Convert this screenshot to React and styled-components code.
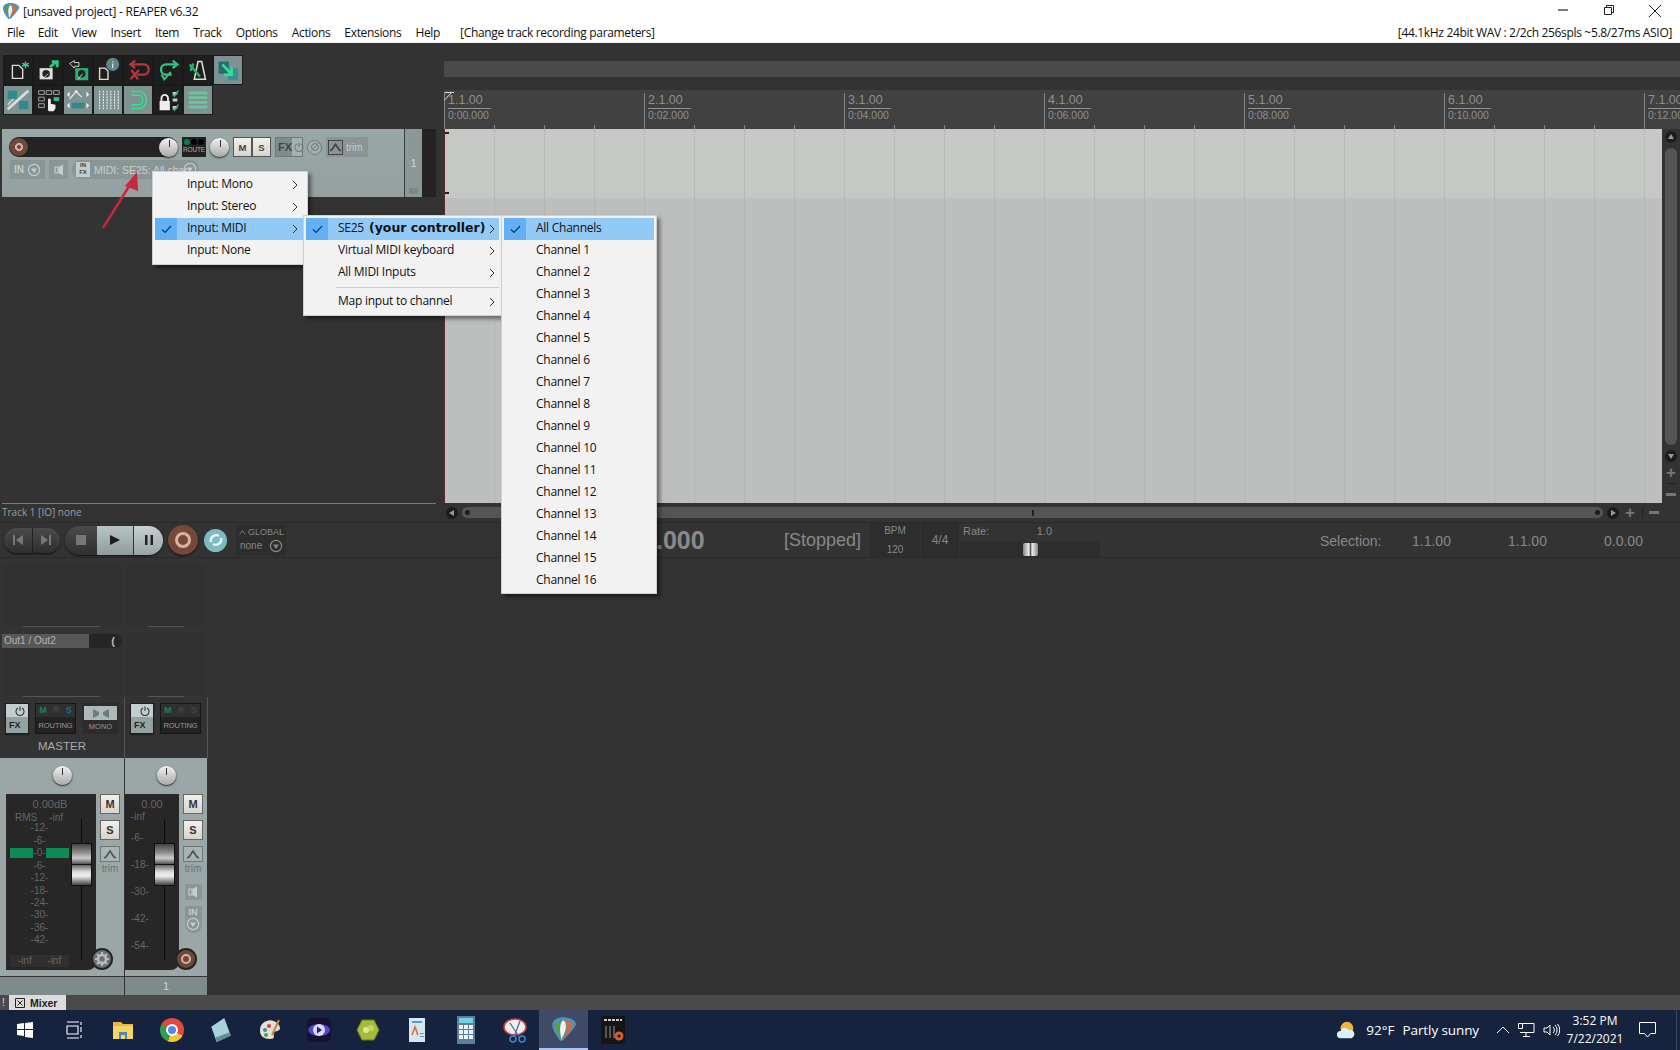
import React from 'react';
import styled, { createGlobalStyle } from 'styled-components';

const MENU_ITEMS = [
  ['File', 7], ['Edit', 13], ['View', 14], ['Insert', 14], ['Item', 14], ['Track', 14],
  ['Options', 14], ['Actions', 14], ['Extensions', 14], ['Help', 14],
];
const BARS = ['1.1.00|0:00.000', '2.1.00|0:02.000', '3.1.00|0:04.000', '4.1.00|0:06.000', '5.1.00|0:08.000', '6.1.00|0:10.000', '7.1.00|0:12.000'];
const MASTER_SCALE = ['-12-', '-6-', '-0-', '-6-', '-12-', '-18-', '-24-', '-30-', '-36-', '-42-'];
const TRACK_SCALE = ['-6-', '-18-', '-30-', '-42-', '-54-'];
const CHANNELS = Array.from({ length: 16 }, (_, i) => `Channel ${i + 1}`);
const BEATS = Array.from({ length: 25 }, (_, i) => i);

const TOOLBAR_ONE = [
  { d: <><path d="M9 10h7l4 4v10H9z" fill="none" stroke="#ddd" strokeWidth="1.5" /><path d="M23 6v7M19.5 8l7 3M26.5 8l-7 3" stroke="#3fd08c" strokeWidth="1.5" /></> },
  { d: <><path d="M6 13h14v12H6z" fill="#ddd" /><circle cx="13" cy="19" r="4" fill="#222" /><path d="M10 24l5-5" stroke="#ddd" /><path d="M17 12l7-6M19 6h6v6" stroke="#2fc683" strokeWidth="3" fill="none" /></> },
  { d: <><path d="M6 8l5-3v2h5v4h-5v2z" fill="none" stroke="#ddd" /><path d="M12 13h14v13H12z" fill="#28b070" /><circle cx="19" cy="19" r="4" fill="#222" /><path d="M15 25l5-6" stroke="#ddd" /></> },
  { d: <><path d="M6 13h6l3 3v9H6z" fill="none" stroke="#ddd" strokeWidth="1.5" /><circle cx="20" cy="9" r="7" fill="#5f8486" /><path d="M20 6v1M20 8v5" stroke="#ddd" strokeWidth="1.4" /></> },
  { d: <><path d="M8 9h13a5 5 0 010 11h-7" fill="none" stroke="#b3383b" strokeWidth="2.5" /><path d="M12 5L7 9l5 4" fill="none" stroke="#b3383b" strokeWidth="2.5" /><path d="M7 25l9-10M8 15l7 10" stroke="#b3383b" strokeWidth="2.5" /></> },
  { d: <><path d="M24 9H13a5 5 0 000 11h6" fill="none" stroke="#2fc683" strokeWidth="2.5" /><path d="M20 5l5 4-5 4" fill="none" stroke="#2fc683" strokeWidth="2.5" /><path d="M8 20l3 5 7-8" fill="none" stroke="#2fc683" strokeWidth="2" /></> },
  { d: <><path d="M11 25l4-19 4 0 4 19z" fill="none" stroke="#ddd" strokeWidth="1.6" /><path d="M6 9l11 13M10 8l-3 8" stroke="#22b56e" strokeWidth="2.5" /></> },
  { on: true, d: <><path d="M5 6h11v13H5z" fill="#1f6e72" /><path d="M15 13h11v13H15z" fill="#3b8f92" /><path d="M9 9l10 11M19 12v8h-8" stroke="#35e08e" strokeWidth="2.6" fill="none" /></> },
];
const TOOLBAR_TWO = [
  { on: true, d: <><path d="M4 5h10v9H4zM16 16h10v9H16z" fill="#2f8a8c" /><path d="M4 25L26 5" stroke="#d6dcdc" strokeWidth="3" /><path d="M4 20l6-6M20 11l6-6" stroke="#d6dcdc" strokeWidth="1.4" /></> },
  { d: <><path d="M5 5h6v4H5zM13 5h6v4h-6zM21 5h6v4h-6zM5 12h6v4H5zM5 19h6v4H5z" fill="none" stroke="#aaa" /><path d="M21 12h6v4h-6z" fill="#2fc683" /><path d="M15 26v-11a1.5 1.5 0 013 0v4l5 1v4l-2 3h-5z" fill="#eee" /></> },
  { on: true, d: <><path d="M6 14l7-8 6 6" fill="none" stroke="#eee" strokeWidth="1.2" /><circle cx="13" cy="6" r="1.5" fill="#eee" /><path d="M3 9l3-3v6zM27 9l-3-3v6zM3 21l3-3v6zM27 21l-3-3v6z" fill="#eee" /><path d="M8 18h14v6H8z" fill="#2f8a8c" /></> },
  { on: true, d: <path d="M6 5v20M10 5v20M14 5v20M18 5v20M22 5v20M26 5v20" stroke="#e7eeee" strokeWidth="1.2" strokeDasharray="2 1" /> },
  { on: true, d: <path d="M8 6h8a8 9 0 010 18H8M8 10h8a4 5 0 010 10H8" fill="none" stroke="#35e08e" strokeWidth="1.6" /> },
  { d: <><path d="M6 16h11v10H6z" fill="#eee" /><path d="M8 16v-3a3.5 3.5 0 017 0v3" fill="none" stroke="#eee" strokeWidth="2" /><path d="M20 8h5M20 15h5M20 23h5" stroke="#ccc" strokeWidth="3" /><path d="M20 9l2 2 4-6M20 24l2 2 4-6" fill="none" stroke="#2fc683" strokeWidth="1.5" /></> },
  { on: true, d: <path d="M5 6h20v3H5zM5 11h20v3H5zM5 16h20v3H5zM5 21h20v3H5z" fill="#6fc8a0" opacity=".85" /> },
];

const ReaperLogo = ({ size = 18 }) => (
  <svg width={size} height={size} viewBox="0 0 20 20">
    <path d="M10 1C5 1 1 3 1 7c0 4 4 9 6 12h2c3-3 8-8 10-12 1-3-4-6-9-6z" fill="#4d94b8" />
    <path d="M10.5 3.5c3 0 6 1.5 6 3.5 0 3-4 8-7.5 11 2-4 4-8 3-11-.5-1.500-1-2.500-1.500-3.500z" fill="#d9683c" />
    <path d="M8 18C6 14 3.500 9.500 3.500 7c0-2 2.500-3.500 5-3.500-2.500 3.500-1.500 9-.5 14.500z" fill="#5d9e3a" />
    <path d="M9 3.500c1.500 0 2.500 2 2.500 4.500 0 3-2 7-3.500 10-1-5-2-11 1-14.500z" fill="#f2f2f2" />
  </svg>
);

const ArrowDown = () => (
  <svg width="14" height="14" viewBox="0 0 14 14">
    <circle cx="7" cy="7" r="5.6" fill="none" stroke="currentColor" strokeWidth="1.2" />
    <path d="M4 5.500h6L7 10z" fill="currentColor" />
  </svg>
);

const EnvelopeGlyph = () => (
  <svg width="14" height="10" viewBox="0 0 14 10">
    <path d="M1 9l2-1 4-6 4 6 2 1" fill="none" stroke="currentColor" strokeWidth="1.8" />
  </svg>
);

const SendGlyph = () => (
  <svg width="10" height="14" viewBox="0 0 10 14">
    <path d="M1 4h3v6H1z" fill="none" stroke="currentColor" strokeWidth="1.2" />
    <path d="M4.500 4l4.500-2.500v11L4.500 10z" fill="currentColor" />
  </svg>
);

const PowerGlyph = ({ color = '#333' }) => (
  <svg width="10" height="10" viewBox="0 0 10 10">
    <path d="M3 2a4 4 0 104 0M5 .5V5" fill="none" stroke={color} strokeWidth="1.1" />
  </svg>
);

const Fader = ({ $left }) => (
  <FaderCap $left={$left}>
    <CapHalf />
    <CapHalf $lower />
  </FaderCap>
);

const Menu = ({ children, $x, $y, $w, $h, $z }) => (
  <MenuBox style={{ left: $x, top: $y, width: $w, height: $h, zIndex: $z }}>{children}</MenuBox>
);

const MenuRow = ({ label, checked, arrow, active, bold, $arrowAt }) => (
  <Row $active={active}>
    <Check $active={active}>
      {checked && (
        <svg width="11" height="9" viewBox="0 0 11 9">
          <path d="M1 4.500l3 3 6-6.500" fill="none" stroke="#14395c" strokeWidth="1.2" />
        </svg>
      )}
    </Check>
    <RowLabel>
      {label}
      {bold && <BoldLabel>{bold}</BoldLabel>}
    </RowLabel>
    {arrow && (
      <Chevron $at={$arrowAt} width="6" height="10" viewBox="0 0 6 10">
        <path d="M1 1l4 4-4 4" fill="none" stroke="#333" strokeWidth="1" />
      </Chevron>
    )}
  </Row>
);

const TaskIcons = [
  <svg width="20" height="20" viewBox="0 0 20 20" key="start"><path d="M2 4l7-1v6H2zM10 3l8-1v7h-8zM2 10h7v6l-7-1zM10 10h8v8l-8-1z" fill="#fff" /></svg>,
  <svg width="20" height="20" viewBox="0 0 20 20" key="view" fill="none" stroke="#fff" strokeWidth="1.1"><path d="M3 2h12M3 18h12" /><path d="M3 6h11v8H3z" /><path d="M17 2v3M17 7v5M17 15v3" /></svg>,
  <svg width="24" height="24" viewBox="0 0 24 24" key="files"><path d="M2 4h8l2 2h10v15H2z" fill="#e8b93f" /><path d="M2 8h20v13H2z" fill="#f7d463" /><path d="M8 14h8v7h-2v-4h-4v4H8z" fill="#4c87b8" /></svg>,
  <ChromeIcon key="chrome" />,
  <svg width="26" height="26" viewBox="0 0 24 24" key="notes"><path d="M3 9L15 1l6 16-13 6z" fill="#a8d2da" /><path d="M8 23l13-6-1-3-13 5z" fill="#5d8f9c" /></svg>,
  <svg width="26" height="26" viewBox="0 0 26 26" key="paint"><path d="M3 14a10 9 0 0120-3c0 4-5 2-6 5s2 6-4 6-10-3-10-8z" fill="#e4e0d2" /><circle cx="8" cy="13" r="2" fill="#3a7fd0" /><circle cx="12" cy="9" r="2" fill="#d23f3f" /><circle cx="9" cy="18" r="2" fill="#3fa34f" /><path d="M15 18L22 3" stroke="#c28a45" strokeWidth="2" /></svg>,
  <svg width="26" height="26" viewBox="0 0 26 26" key="player"><rect x="1" y="1" width="24" height="24" rx="5" fill="#171233" /><ellipse cx="13" cy="13" rx="11" ry="6" fill="#5248c9" /><circle cx="13" cy="13" r="6" fill="#ddd8ff" /><path d="M11 9.500l5 3.500-5 3.500z" fill="#281d75" /></svg>,
  <svg width="24" height="24" viewBox="0 0 24 24" key="hex"><path d="M6 2h12l5 10-5 10H6L1 12z" fill="#a3bb37" stroke="#6c8022" /><circle cx="10" cy="12" r="3" fill="#dbe89a" /><circle cx="15" cy="10" r="3" fill="#c1d663" /></svg>,
  <svg width="22" height="26" viewBox="0 0 22 26" key="doc"><path d="M3 1h16v24H3z" fill="#d7e6f3" /><path d="M6 4h10v2H6zM14 16h4v1h-4zM14 19h4v1h-4z" fill="#5a98d0" /><path d="M6 18l3-8 3 8" fill="none" stroke="#e06a3b" strokeWidth="1.6" /></svg>,
  <svg width="20" height="28" viewBox="0 0 20 28" key="calc"><rect x="1" y="0" width="18" height="28" fill="#5e7f9b" /><rect x="3" y="2" width="14" height="5" fill="#6fd1ea" /><path d="M3 9h4v4H3zM8 9h4v4H8zM13 9h4v4h-4zM3 14h4v4H3zM8 14h4v4H8zM13 14h4v4h-4zM3 19h4v4H3zM8 19h4v4H8zM13 19h4v4h-4z" fill="#eef3f7" /></svg>,
  <svg width="26" height="26" viewBox="0 0 26 26" key="snip"><ellipse cx="13" cy="10" rx="11" ry="8" fill="#f0eee8" stroke="#c7414a" strokeWidth="1.5" /><path d="M8 6l10 15M18 4L12 20" stroke="#3b6d9d" strokeWidth="1.2" /><circle cx="20" cy="22" r="3" fill="none" stroke="#3a8ad0" strokeWidth="1.5" /><circle cx="11" cy="22" r="3" fill="none" stroke="#3a8ad0" strokeWidth="1.5" /></svg>,
  <ReaperLogo size={26} key="reaper" />,
  <svg width="26" height="30" viewBox="0 0 26 30" key="tascam"><rect x="1" y="1" width="24" height="28" rx="2" fill="#151515" /><path d="M4 5h18" stroke="#ccc" strokeWidth="2" strokeDasharray="3 1" /><path d="M6 11v12M10 11v12M14 11v12" stroke="#999" /><circle cx="19" cy="21" r="4.500" fill="#d75a2a" /><circle cx="19" cy="21" r="1.600" fill="#151515" /></svg>,
];

function ChromeIcon() {
  return (
    <ChromeDisc>
      <ChromeDot />
    </ChromeDisc>
  );
}

const App = () => (
  <Page>
    <GlobalStyle />
    <TitleBar>
      <TitleGroup>
        <ReaperLogo />
        <span>[unsaved project] - REAPER v6.32</span>
      </TitleGroup>
      <WindowButtons>
        <WinButton>
          <svg width="12" height="12" viewBox="0 0 12 12"><path d="M1 6h10" stroke="#222" strokeWidth="1.2" /></svg>
        </WinButton>
        <WinButton>
          <svg width="12" height="12" viewBox="0 0 12 12" fill="none" stroke="#222"><path d="M1.500 3.500h7v7h-7z" /><path d="M3.500 3V1.500h7v7H9" /></svg>
        </WinButton>
        <WinButton>
          <svg width="14" height="14" viewBox="0 0 14 14"><path d="M1 1l12 12M13 1L1 13" stroke="#222" strokeWidth="1" /></svg>
        </WinButton>
      </WindowButtons>
    </TitleBar>
    <MenuBar>
      {MENU_ITEMS.map(([name, gap]) => (
        <MenuLabel key={name} $gap={gap}>{name}</MenuLabel>
      ))}
      <MenuHint>[Change track recording parameters]</MenuHint>
      <MenuStatus>[44.1kHz 24bit WAV : 2/2ch 256spls ~5.8/27ms ASIO]</MenuStatus>
    </MenuBar>

    <Workspace>
      <LeftPane>
        <ToolRow>
          {TOOLBAR_ONE.map((t, i) => (
            <ToolCell key={i} $on={t.on}><svg width="28" height="28" viewBox="0 0 30 30">{t.d}</svg></ToolCell>
          ))}
        </ToolRow>
        <ToolRow>
          {TOOLBAR_TWO.map((t, i) => (
            <ToolCell key={i} $on={t.on}><svg width="28" height="28" viewBox="0 0 30 30">{t.d}</svg></ToolCell>
          ))}
        </ToolRow>
        <TrackLane>
          <TrackPanel>
            <TrackRow>
              <NameField>
                <RecArm $size={18} />
                <Knob $size={19} />
              </NameField>
              <RouteBox>
                <RouteDots><i /><b /><b /></RouteDots>
                ROUTE
              </RouteBox>
              <Knob $size={19} />
              <MuteSolo>
                <MsButton>M</MsButton>
                <MsButton>S</MsButton>
              </MuteSolo>
              <FxBox>
                <span>FX</span>
                <FxPower><PowerGlyph color="#6f7c7c" /></FxPower>
              </FxBox>
              <PhaseButton>
                <svg width="10" height="10" viewBox="0 0 10 10"><circle cx="5" cy="5" r="3.500" fill="none" stroke="#777" /><path d="M1 9l8-8" stroke="#777" /></svg>
              </PhaseButton>
              <TrimBox>
                <EnvButton><EnvelopeGlyph /></EnvButton>
                trim
              </TrimBox>
            </TrackRow>
            <TrackRow>
              <InBox>IN <ArrowDown /></InBox>
              <SendBox><SendGlyph /></SendBox>
              <InputChip>
                <InFxIcon>IN<br />FX</InFxIcon>
                <InputText>MIDI: SE25: All chan</InputText>
                <ChipArrow><ArrowDown /></ChipArrow>
              </InputChip>
            </TrackRow>
          </TrackPanel>
          <TrackNumber>
            1
            <FolderMark />
          </TrackNumber>
          <MeterStrip />
        </TrackLane>
        <Status>Track 1 [IO] none</Status>
      </LeftPane>

      <ArrangePane>
        <MarkerLane />
        <Ruler>
          <StartFlag width="11" height="9" viewBox="0 0 11 9">
            <path d="M0 8.500L7.500.5H.5M10 .5H7.500" fill="none" stroke="#ddd" />
          </StartFlag>
          {BARS.map((b) => {
            const [bar, time] = b.split('|');
            return (
              <BarMark key={b}>
                <BarText>{bar}</BarText>
                <TimeText>{time}</TimeText>
              </BarMark>
            );
          })}
        </Ruler>
        <ArrangeBody>
          <Tracks>
            <Beats>
              {BEATS.map((n) => <Beat key={n} />)}
            </Beats>
            <TrackBand />
            <EmptyBand />
            <RailTick $top={3} />
            <RailTick $top={63} />
          </Tracks>
          <VScroll>
            <ScrollDot>
              <svg width="8" height="8" viewBox="0 0 8 8"><path d="M4 1l3 5H1z" fill="#999" /></svg>
            </ScrollDot>
            <VThumb />
            <ScrollDot>
              <svg width="8" height="8" viewBox="0 0 8 8"><path d="M4 7L1 2h6z" fill="#999" /></svg>
            </ScrollDot>
            <ZoomPlus>+</ZoomPlus>
            <ZoomBar />
            <ZoomMinus />
          </VScroll>
        </ArrangeBody>
        <HScroll>
          <ScrollDot>
            <svg width="8" height="8" viewBox="0 0 8 8"><path d="M1 4l5-3v6z" fill="#999" /></svg>
          </ScrollDot>
          <HThumb>
            <ThumbKnob />
            <ThumbTick />
            <ThumbKnob />
          </HThumb>
          <ScrollDot>
            <svg width="8" height="8" viewBox="0 0 8 8"><path d="M7 4L2 1v6z" fill="#999" /></svg>
          </ScrollDot>
          <ZoomPlus>+</ZoomPlus>
          <ZoomBarV />
          <ZoomMinus />
        </HScroll>
      </ArrangePane>
    </Workspace>

    <Transport>
      <SkipPill>
        <SkipCell>
          <svg width="12" height="12" viewBox="0 0 12 12"><path d="M1 1h2v10H1zM11 1v10L4 6z" fill="#777" /></svg>
        </SkipCell>
        <SkipCell>
          <svg width="12" height="12" viewBox="0 0 12 12"><path d="M9 1h2v10H9zM1 1v10l7-5z" fill="#777" /></svg>
        </SkipCell>
      </SkipPill>
      <PlayPill>
        <StopCell>
          <svg width="10" height="10" viewBox="0 0 10 10"><rect width="10" height="10" fill="#777" /></svg>
        </StopCell>
        <PlayCell>
          <svg width="10" height="10" viewBox="0 0 10 10"><path d="M0 0l10 5-10 5z" fill="#1d1d1d" /></svg>
        </PlayCell>
        <PauseCell>
          <svg width="10" height="12" viewBox="0 0 10 12"><path d="M1 1h2.500v10H1zM6.500 1H9v10H6.500z" fill="#222" /></svg>
        </PauseCell>
      </PlayPill>
      <RecordBig><RecordRing /></RecordBig>
      <RepeatButton>
        <svg width="16" height="16" viewBox="0 0 16 16" fill="none" stroke="#eef" strokeWidth="2.4"><path d="M3 10a5.400 5.400 0 018-6M13 6a5.400 5.400 0 01-8 6" /></svg>
      </RepeatButton>
      <GlobalBox>
        <GlobalTop><EnvelopeGlyph /> GLOBAL</GlobalTop>
        <GlobalBottom>none <ArrowDown /></GlobalBottom>
      </GlobalBox>
      <TimeReadout>.000</TimeReadout>
      <StoppedText>[Stopped]</StoppedText>
      <BpmBox>
        <span>BPM</span>
        <span>120</span>
      </BpmBox>
      <SigBox>4/4</SigBox>
      <RateBox>
        <RateTop><span>Rate:</span><span>1.0</span></RateTop>
        <RateSlider><RateHandle /></RateSlider>
      </RateBox>
      <SelectionGroup>
        <SelectionLabel>Selection:</SelectionLabel>
        <SelectionValue>1.1.00</SelectionValue>
        <SelectionValue>1.1.00</SelectionValue>
        <SelectionValue>0.0.00</SelectionValue>
      </SelectionGroup>
    </Transport>

    <Mixer>
      <Strip $w={125}>
        <FxSlots />
        <SlotDivider $w={77} $shift={23} />
        <SendArea>
          <SendSlot>
            <SendFill>Out1 / Out2</SendFill>
            <PanMark>(</PanMark>
          </SendSlot>
        </SendArea>
        <SlotDivider $w={77} $shift={23} />
        <StripButtons>
          <FxToggle>
            <FxToggleTop><PowerGlyph /></FxToggleTop>
            <FxToggleBottom>FX</FxToggleBottom>
          </FxToggle>
          <RoutingBox $w={41}>
            <RoutingTop><Green>M</Green><Dim>R</Dim><Blue>S</Blue></RoutingTop>
            <RoutingBottom>ROUTING</RoutingBottom>
          </RoutingBox>
          <MonoBox>
            <MonoTop>
              <svg width="16" height="9" viewBox="0 0 16 9"><path d="M0 0l6 3v3L0 9zM16 0l-6 3v3l6 3z" fill="#6f7b7b" /></svg>
            </MonoTop>
            MONO
          </MonoBox>
        </StripButtons>
        <StripName>MASTER</StripName>
        <FaderPanel>
          <KnobRow><Knob $size={19} /></KnobRow>
          <FaderBody>
            <MeterBlock $w={90}>
              <PeakText>0.00dB</PeakText>
              <RmsRow><span>RMS</span><span>-inf</span></RmsRow>
              <ScaleList>
                {MASTER_SCALE.map((s, i) => (
                  <ScaleRow key={i}>
                    {s === '-0-' && <GreenBar />}
                    <ScaleText>{s}</ScaleText>
                    {s === '-0-' && <GreenBar />}
                  </ScaleRow>
                ))}
              </ScaleList>
              <PeakFoot><span>-inf</span><span>-inf</span></PeakFoot>
              <FaderLine $left={75} />
              <Fader $left={66} />
            </MeterBlock>
            <SideButtons>
              <SquareButton>M</SquareButton>
              <SquareButton>S</SquareButton>
              <TrimButton><EnvelopeGlyph /></TrimButton>
              <TrimText>trim</TrimText>
            </SideButtons>
            <CornerButton $left={91} $color="#6a7070">
              <svg width="16" height="16" viewBox="0 0 16 16">
                <circle cx="8" cy="8" r="4" fill="none" stroke="#b8bcbc" strokeWidth="2.6" />
                <path d="M8 1v3M8 12v3M1 8h3M12 8h3M3 3l2 2M11 11l2 2M13 3l-2 2M5 11l-2 2" stroke="#b8bcbc" strokeWidth="2" />
              </svg>
            </CornerButton>
          </FaderBody>
        </FaderPanel>
        <TrackFoot />
      </Strip>

      <Strip $w={83}>
        <FxSlots />
        <SlotDivider $w={36} $shift={23} />
        <SendArea />
        <SlotDivider $w={36} $shift={23} />
        <StripButtons>
          <FxToggle>
            <FxToggleTop><PowerGlyph /></FxToggleTop>
            <FxToggleBottom>FX</FxToggleBottom>
          </FxToggle>
          <RoutingBox $w={41}>
            <RoutingTop><Green>M</Green><Dim>R</Dim><Dim>S</Dim></RoutingTop>
            <RoutingBottom>ROUTING</RoutingBottom>
          </RoutingBox>
        </StripButtons>
        <StripName />
        <FaderPanel>
          <KnobRow><Knob $size={19} /></KnobRow>
          <FaderBody>
            <MeterBlock $w={54} $flush>
              <PeakText $center={27}>0.00</PeakText>
              <TrackScale>
                <InfText>-inf</InfText>
                {TRACK_SCALE.map((s) => <TrackScaleText key={s}>{s}</TrackScaleText>)}
              </TrackScale>
              <FaderLine $left={39} />
              <Fader $left={30} />
            </MeterBlock>
            <SideButtons>
              <SquareButton>M</SquareButton>
              <SquareButton>S</SquareButton>
              <TrimButton><EnvelopeGlyph /></TrimButton>
              <TrimText>trim</TrimText>
              <SendTab><SendGlyph /></SendTab>
              <InTab>IN<ArrowDown /></InTab>
            </SideButtons>
            <CornerButton $left={50} $color="#6b4a3e"><RecDot /></CornerButton>
          </FaderBody>
        </FaderPanel>
        <TrackFoot>1</TrackFoot>
      </Strip>
    </Mixer>

    <DockBar>
      <DockBang>!</DockBang>
      <DockTab>
        <svg width="10" height="10" viewBox="0 0 10 10" fill="none" stroke="#222"><path d="M.5.5h9v9h-9zM2.500 2.500l5 5M7.500 2.500l-5 5" /></svg>
        Mixer
      </DockTab>
    </DockBar>

    <Taskbar>
      <TaskIconRow>
        {TaskIcons.map((icon, i) => (
          <TaskCell key={i} $active={i === 11}>{icon}</TaskCell>
        ))}
      </TaskIconRow>
      <Tray>
        <svg width="20" height="20" viewBox="0 0 22 20">
          <circle cx="12" cy="8" r="7" fill="#f3b43a" />
          <path d="M5 19a4 4 0 010-8 5 5 0 019-1 4.500 4.500 0 013 9z" fill="#dbeefa" />
        </svg>
        <TrayTemp>92°F</TrayTemp>
        <TrayWeather>Partly sunny</TrayWeather>
        <TrayIcons>
          <svg width="14" height="8" viewBox="0 0 14 8"><path d="M1 7l6-6 6 6" fill="none" stroke="#fff" /></svg>
          <svg width="17" height="16" viewBox="0 0 17 16" fill="none" stroke="#fff"><path d="M5 1.500h11v9H2" /><path d="M.5 1.500h4v5h-4zM8 11v3M5 14.500h7" /></svg>
          <svg width="17" height="14" viewBox="0 0 17 14" fill="none" stroke="#fff"><path d="M1 5v4h3l3 3V2L4 5z" /><path d="M10 4a4 4 0 010 6M12 2a7 7 0 010 10M14.500 1a9 9 0 010 12" /></svg>
        </TrayIcons>
        <Clock>
          <span>3:52 PM</span>
          <span>7/22/2021</span>
        </Clock>
        <NotifyIcon>
          <svg width="17" height="16" viewBox="0 0 17 16" fill="none" stroke="#fff"><path d="M.5.5h16v11h-5L8.500 15l-3-3.500h-5z" /></svg>
        </NotifyIcon>
        <ShowDesktop />
      </Tray>
    </Taskbar>

    <Menu $x={152} $y={171} $w={156} $h={94} $z={3}>
      <MenuRow label="Input: Mono" arrow $arrowAt={137} />
      <MenuRow label="Input: Stereo" arrow $arrowAt={137} />
      <MenuRow label="Input: MIDI" arrow active checked $arrowAt={137} />
      <MenuRow label="Input: None" />
    </Menu>
    <Menu $x={303} $y={215} $w={199} $h={101} $z={4}>
      <MenuRow label="SE25" bold="(your controller)" arrow active checked $arrowAt={183} />
      <MenuRow label="Virtual MIDI keyboard" arrow $arrowAt={183} />
      <MenuRow label="All MIDI Inputs" arrow $arrowAt={183} />
      <MenuSeparator />
      <MenuRow label="Map input to channel" arrow $arrowAt={183} />
    </Menu>
    <Menu $x={501} $y={215} $w={156} $h={379} $z={5}>
      <MenuRow label="All Channels" active checked />
      {CHANNELS.map((c) => <MenuRow key={c} label={c} />)}
    </Menu>

    <RedArrow width="50" height="70" viewBox="0 0 50 70">
      <path d="M6 62L36 14" stroke="#c8283c" strokeWidth="2.5" />
      <path d="M40 6L28 20l13 5z" fill="#c8283c" />
    </RedArrow>
  </Page>
);

export default App;

// Styled Components
const GlobalStyle = createGlobalStyle`
  html, body {
    margin: 0;
    padding: 0;
    background: #333;
  }
  * {
    box-sizing: border-box;
  }
`;

const Page = styled.div`
  position: relative;
  width: 1680px;
  height: 1050px;
  overflow: hidden;
  display: flex;
  flex-direction: column;
  background: #333;
  font-family: 'Open Sans', 'Noto Sans', sans-serif;
  color: #111;
`;

const TitleBar = styled.div`
  height: 22px;
  background: #fff;
  display: flex;
  align-items: center;
  justify-content: space-between;
  font-size: 12px;
  letter-spacing: -0.25px;
`;

const TitleGroup = styled.div`
  display: flex;
  align-items: center;
  gap: 3px;
  padding-left: 2px;
`;

const WindowButtons = styled.div`
  display: flex;
  padding-right: 2px;
`;

const WinButton = styled.div`
  width: 46px;
  display: flex;
  justify-content: center;
`;

const MenuBar = styled.div`
  height: 21px;
  background: #fff;
  border-bottom: 1px solid #f0f0f0;
  display: flex;
  align-items: center;
  font-size: 12px;
  letter-spacing: -0.33px;
  padding-bottom: 0;
`;

const MenuLabel = styled.span`
  margin-left: ${(p) => p.$gap}px;
`;

const MenuHint = styled.span`
  margin-left: 20px;
`;

const MenuStatus = styled.span`
  margin-left: auto;
  margin-right: 8px;
`;

const Workspace = styled.div`
  height: 479px;
  display: grid;
  grid-template-columns: 444px 1fr;
`;

const LeftPane = styled.div`
  display: flex;
  flex-direction: column;
  padding-top: 12px;
`;

const ToolRow = styled.div`
  height: 30px;
  padding-left: 3px;
  display: flex;
`;

const ToolCell = styled.div`
  width: 30px;
  height: 30px;
  background: ${(p) => (p.$on ? '#7f9292' : '#1e1e1e')};
  border: 1px solid #1a1a1a;
`;

const TrackLane = styled.div`
  height: 68px;
  margin-top: 14px;
  padding-left: 2px;
  display: flex;
`;

const TrackPanel = styled.div`
  width: 402px;
  background: linear-gradient(#9aa7a7, #95a1a1);
  padding: 8px 0 0 8px;
  display: flex;
  flex-direction: column;
  gap: 3px;
`;

const TrackRow = styled.div`
  display: flex;
  align-items: center;
  gap: 4px;
`;

const NameField = styled.div`
  width: 168px;
  height: 20px;
  background: #232323;
  border-radius: 10px;
  display: flex;
  align-items: center;
  justify-content: space-between;
`;

const RecArm = styled.div`
  width: ${(p) => p.$size}px;
  height: ${(p) => p.$size}px;
  border-radius: 50%;
  background: radial-gradient(circle, #6e4a3d 0 2px, #d4b0a0 2px 4px, #6e4a3d 4px);
  box-shadow: 0 0 0 1px #2a1c18;
`;

const Knob = styled.div`
  position: relative;
  width: ${(p) => p.$size}px;
  height: ${(p) => p.$size}px;
  border-radius: 50%;
  background: linear-gradient(#f2f2f2, #a8a8a8);
  box-shadow: 0 1px 2px #222;
  flex-shrink: 0;
  &::after {
    content: '';
    position: absolute;
    left: 50%;
    top: 2px;
    width: 1px;
    height: 7px;
    background: #333;
  }
`;

const RouteBox = styled.div`
  width: 24px;
  height: 20px;
  background: #222;
  color: #aaa;
  font: 6.5px 'Liberation Sans', sans-serif;
  letter-spacing: -0.2px;
  text-align: center;
  flex-shrink: 0;
`;

const RouteDots = styled.div`
  display: flex;
  justify-content: center;
  gap: 1px;
  padding: 2px 0 1px;
  i, b {
    display: block;
    width: 6px;
    height: 6px;
    border-radius: 50%;
    background: #000;
  }
  i {
    background: #0f7a4a;
  }
`;

const MuteSolo = styled.div`
  display: flex;
`;

const MsButton = styled.div`
  width: 19px;
  height: 20px;
  background: linear-gradient(#f3f0ea, #d8d5d0);
  border: 1px solid #555;
  color: #444;
  font: bold 9.5px 'Liberation Sans', sans-serif;
  display: flex;
  align-items: center;
  justify-content: center;
`;

const FxBox = styled.div`
  width: 28px;
  height: 20px;
  border: 1px solid #6d7979;
  background: linear-gradient(90deg, #7f8c8c 0 60%, #a5b0b0 60%);
  color: #444;
  font: bold 11px 'Liberation Sans', sans-serif;
  display: flex;
  align-items: center;
  padding-left: 2px;
`;

const FxPower = styled.span`
  margin-left: 2px;
  display: flex;
`;

const PhaseButton = styled.div`
  width: 15px;
  height: 15px;
  border-radius: 50%;
  background: #a5b0b0;
  border: 1px solid #6d7979;
  display: flex;
  align-items: center;
  justify-content: center;
`;

const TrimBox = styled.div`
  width: 42px;
  height: 20px;
  background: #8a9696;
  color: #c4cccc;
  font: 10px 'Liberation Sans', sans-serif;
  display: flex;
  align-items: center;
  gap: 3px;
  padding-left: 2px;
`;

const EnvButton = styled.div`
  width: 15px;
  height: 15px;
  border: 1px solid #444;
  color: #444;
  display: flex;
  align-items: center;
  justify-content: center;
`;

const InBox = styled.div`
  width: 35px;
  height: 19px;
  background: #8a9696;
  color: #c4cccc;
  font: bold 10px 'Liberation Sans', sans-serif;
  display: flex;
  align-items: center;
  justify-content: center;
  gap: 3px;
`;

const SendBox = styled.div`
  width: 19px;
  height: 19px;
  background: #8a9696;
  color: #c4cccc;
  display: flex;
  align-items: center;
  justify-content: center;
`;

const InputChip = styled.div`
  position: relative;
  width: 127px;
  height: 19px;
  background: #8a9696;
  border-radius: 8px;
  display: flex;
  align-items: center;
  padding-left: 4px;
  gap: 4px;
  overflow: hidden;
`;

const InFxIcon = styled.div`
  width: 14px;
  height: 15px;
  background: #c4cccc;
  color: #444;
  font: bold 6px/7px 'Liberation Sans', sans-serif;
  text-align: center;
  flex-shrink: 0;
`;

const InputText = styled.span`
  color: #c8d0d0;
  font: 10.5px 'Liberation Sans', sans-serif;
  white-space: nowrap;
`;

const ChipArrow = styled.span`
  position: absolute;
  right: 2px;
  top: 2px;
  color: #c4cccc;
  display: flex;
`;

const TrackNumber = styled.div`
  position: relative;
  width: 18px;
  background: #8b9898;
  border-left: 1px solid #3a3a3a;
  color: #ccd4d4;
  font: 11px 'Liberation Sans', sans-serif;
  display: flex;
  align-items: center;
  justify-content: center;
`;

const FolderMark = styled.div`
  position: absolute;
  left: 4px;
  bottom: 3px;
  width: 9px;
  height: 6px;
  background: #7c8787;
`;

const MeterStrip = styled.div`
  width: 14px;
  background: #232323;
`;

const Status = styled.div`
  margin-top: auto;
  margin-left: 2px;
  margin-right: 8px;
  height: 19px;
  border-top: 1px solid #7a7a7a;
  color: #9d9d9d;
  font: 10px/17px 'Open Sans', sans-serif;
`;

const ArrangePane = styled.div`
  display: flex;
  flex-direction: column;
  padding-top: 18px;
  min-width: 0;
`;

const MarkerLane = styled.div`
  height: 16px;
  background: #4a4a4a;
`;

const Ruler = styled.div`
  position: relative;
  height: 39px;
  margin-top: 13px;
  background-color: #414141;
  background-image: repeating-linear-gradient(90deg, #8a8a8a 0 1px, transparent 1px 50px);
  background-size: 100% 4px;
  background-position: bottom;
  background-repeat: no-repeat;
  display: flex;
  overflow: hidden;
  padding-top: 3px;
`;

const StartFlag = styled.svg`
  position: absolute;
  left: 0;
  top: 2px;
`;

const BarMark = styled.div`
  width: 200px;
  flex-shrink: 0;
  border-left: 1px solid #858585;
  padding: 1px 0 0 3px;
  color: #8f8f8f;
  height: 36px;
`;

const BarText = styled.div`
  font: 12.5px/13px 'Liberation Sans', sans-serif;
  width: 43px;
  height: 15px;
  border-bottom: 1px solid #8f8f8f;
`;

const TimeText = styled.div`
  font: 10.5px/13px 'Liberation Sans', sans-serif;
`;

const ArrangeBody = styled.div`
  height: 374px;
  display: flex;
`;

const Tracks = styled.div`
  position: relative;
  flex: 1;
  display: flex;
  flex-direction: column;
  overflow: hidden;
  border-left: 1px solid #5a2a2a;
`;

const Beats = styled.div`
  position: absolute;
  inset: 0 0 0 -1px;
  display: flex;
`;

const Beat = styled.div`
  width: 50px;
  flex-shrink: 0;
  border-left: 1px dotted #a9aba9;
`;

const TrackBand = styled.div`
  height: 69px;
  background: #c6c8c6;
`;

const EmptyBand = styled.div`
  flex: 1;
  background: #bcbfbd;
`;

const RailTick = styled.div`
  position: absolute;
  left: 0;
  top: ${(p) => p.$top}px;
  width: 4px;
  height: 2px;
  background: #3a1818;
  z-index: 1;
`;

const VScroll = styled.div`
  width: 18px;
  display: flex;
  flex-direction: column;
  align-items: center;
  padding-top: 2px;
`;

const ScrollDot = styled.div`
  width: 12px;
  height: 12px;
  flex-shrink: 0;
  border-radius: 50%;
  background: #1c1c1c;
  display: flex;
  align-items: center;
  justify-content: center;
`;

const VThumb = styled.div`
  width: 12px;
  flex: 1;
  margin: 5px 0;
  background: #555;
  border-radius: 6px;
`;

const ZoomPlus = styled.div`
  width: 14px;
  height: 14px;
  margin-top: 4px;
  flex-shrink: 0;
  color: #777;
  font: bold 17px/13px 'Liberation Sans', sans-serif;
  text-align: center;
`;

const ZoomBar = styled.div`
  width: 10px;
  height: 1px;
  margin: 3px 0 9px;
  background: #222;
`;

const ZoomBarV = styled.div`
  width: 1px;
  height: 10px;
  margin: 0 6px 0 5px;
  background: #222;
`;

const ZoomMinus = styled.div`
  width: 10px;
  height: 3px;
  margin-bottom: 7px;
  background: #777;
  flex-shrink: 0;
`;

const HScroll = styled.div`
  height: 19px;
  display: flex;
  align-items: center;
  padding: 0 21px 0 2px;
  ${ZoomMinus} {
    margin-bottom: 0;
  }
  ${ZoomPlus} {
    margin: 0 0 0 4px;
  }
`;

const HThumb = styled.div`
  flex: 1;
  height: 11px;
  margin: 0 4px;
  background: #555;
  border-radius: 6px;
  display: flex;
  align-items: center;
  justify-content: space-between;
  padding: 0 3px;
`;

const ThumbKnob = styled.div`
  width: 5px;
  height: 5px;
  border-radius: 50%;
  background: #1d1d1d;
`;

const ThumbTick = styled.div`
  width: 2px;
  height: 6px;
  background: #222;
`;

const Transport = styled.div`
  height: 36px;
  display: flex;
  align-items: center;
  padding-left: 4px;
  border-top: 1px solid #2a2a2a;
  border-bottom: 1px solid #2a2a2a;
  color: #888;
  font-family: 'Liberation Sans', sans-serif;
  > * {
    flex-shrink: 0;
  }
`;

const SkipPill = styled.div`
  width: 56px;
  height: 25px;
  border-radius: 13px;
  background: linear-gradient(#4a4a4a, #2f2f2f);
  box-shadow: 0 1px 2px #111;
  display: flex;
`;

const SkipCell = styled.div`
  flex: 1;
  display: flex;
  align-items: center;
  justify-content: center;
  & + & {
    border-left: 1px solid #222;
  }
`;

const PlayPill = styled.div`
  width: 98px;
  height: 29px;
  margin-left: 5px;
  border-radius: 15px;
  overflow: hidden;
  display: flex;
  box-shadow: 0 1px 2px #111;
`;

const StopCell = styled.div`
  width: 32px;
  background: linear-gradient(#4a4a4a, #2f2f2f);
  display: flex;
  align-items: center;
  justify-content: center;
`;

const PlayCell = styled.div`
  width: 36px;
  background: linear-gradient(#b8c3c3, #909c9c);
  display: flex;
  align-items: center;
  justify-content: center;
`;

const PauseCell = styled.div`
  flex: 1;
  margin-left: 1px;
  background: linear-gradient(#c7d1d1, #98a4a4);
  display: flex;
  align-items: center;
  justify-content: center;
`;

const RecordBig = styled.div`
  width: 30px;
  height: 30px;
  margin-left: 5px;
  border-radius: 50%;
  background: #74483a;
  box-shadow: 0 1px 2px #111;
  display: flex;
  align-items: center;
  justify-content: center;
`;

const RecordRing = styled.div`
  width: 16px;
  height: 16px;
  border-radius: 50%;
  border: 3px solid #d8b2a2;
`;

const RepeatButton = styled.div`
  width: 23px;
  height: 23px;
  margin-left: 6px;
  border-radius: 50%;
  background: #7dbcbe;
  display: flex;
  align-items: center;
  justify-content: center;
`;

const GlobalBox = styled.div`
  width: 50px;
  height: 31px;
  margin-left: 9px;
  padding: 2px 2px 0 3px;
  background: #2d2d2d;
  font-size: 9px;
`;

const GlobalTop = styled.div`
  display: flex;
  align-items: center;
  gap: 2px;
`;

const GlobalBottom = styled.div`
  display: flex;
  align-items: center;
  justify-content: space-between;
  margin-top: 2px;
  font-size: 10px;
  padding: 0 1px;
`;

const TimeReadout = styled.div`
  margin-left: 370px;
  width: 128px;
  color: #8a8a8a;
  font: bold 25px 'Liberation Sans', sans-serif;
`;

const StoppedText = styled.div`
  font-size: 18px;
  width: 81px;
`;

const BpmBox = styled.div`
  width: 50px;
  margin-left: 5px;
  height: 34px;
  background: #2d2d2d;
  display: flex;
  flex-direction: column;
  align-items: center;
  justify-content: space-between;
  padding: 2px 0;
  font-size: 10px;
`;

const SigBox = styled.div`
  width: 38px;
  height: 34px;
  margin-left: 1px;
  background: #2d2d2d;
  font-size: 12px;
  display: flex;
  align-items: center;
  justify-content: center;
`;

const RateBox = styled.div`
  width: 140px;
  height: 34px;
  margin-left: 1px;
  display: flex;
  flex-direction: column;
  justify-content: space-between;
  font-size: 11px;
`;

const RateTop = styled.div`
  display: flex;
  justify-content: space-between;
  padding: 2px 48px 0 3px;
`;

const RateSlider = styled.div`
  position: relative;
  height: 15px;
  background: #2d2d2d;
`;

const RateHandle = styled.div`
  position: absolute;
  left: 63px;
  top: 1px;
  width: 15px;
  height: 13px;
  border-radius: 2px;
  background: linear-gradient(90deg, #888, #eee 40%, #555 50%, #eee 60%, #888);
`;

const SelectionGroup = styled.div`
  margin-left: 220px;
  padding-top: 2px;
  display: flex;
  align-items: center;
  font-size: 14px;
`;

const SelectionLabel = styled.span`
  width: 92px;
`;

const SelectionValue = styled.span`
  width: 96px;
`;

const Mixer = styled.div`
  height: 437px;
  display: flex;
`;

const Strip = styled.div`
  width: ${(p) => p.$w}px;
  display: flex;
  flex-direction: column;
`;

const FxSlots = styled.div`
  height: 62px;
  margin: 6px 2px 0;
  background: #313131;
`;

const SlotDivider = styled.div`
  width: ${(p) => p.$w}px;
  height: 1px;
  flex-shrink: 0;
  margin-left: ${(p) => p.$shift}px;
  background: #565656;
`;

const SendArea = styled.div`
  height: 70px;
  margin: 0 2px;
  padding-top: 7px;
  background: linear-gradient(#333 0 6px, #313131 6px);
`;

const SendSlot = styled.div`
  width: 120px;
  height: 14px;
  background: #262626;
  border-radius: 0 7px 7px 0;
  display: flex;
  align-items: center;
  justify-content: space-between;
`;

const SendFill = styled.div`
  width: 87px;
  height: 14px;
  background: #575757;
  color: #b4b4b4;
  padding-left: 2px;
  font: 10px/13px 'Liberation Sans', sans-serif;
`;

const PanMark = styled.span`
  color: #bbb;
  font: bold 11px 'Liberation Sans', sans-serif;
  padding-right: 7px;
`;

const StripButtons = styled.div`
  height: 38px;
  padding: 6px 0 0 5px;
  display: flex;
  gap: 6px;
  border-right: 1px solid #555;
`;

const FxToggle = styled.div`
  width: 24px;
  height: 31px;
  border: 1px solid #1d1d1d;
  display: flex;
  flex-direction: column;
  box-shadow: 0 1px 1px #222;
`;

const FxToggleTop = styled.div`
  height: 13px;
  background: #c3cdcd;
  display: flex;
  justify-content: flex-end;
  align-items: center;
  padding-right: 3px;
`;

const FxToggleBottom = styled.div`
  flex: 1;
  background: #93a2a2;
  color: #222;
  padding: 3px 0 0 3px;
  font: bold 9px 'Liberation Sans', sans-serif;
`;

const RoutingBox = styled.div`
  width: ${(p) => p.$w}px;
  height: 31px;
  border: 1px solid #161616;
  background: #222;
  display: flex;
  flex-direction: column;
`;

const RoutingTop = styled.div`
  height: 13px;
  background: #303030;
  display: flex;
  justify-content: space-around;
  font: bold 9px/13px 'Liberation Sans', sans-serif;
`;

const Green = styled.span`
  color: #0e8a55;
`;

const Dim = styled.span`
  color: #444;
`;

const Blue = styled.span`
  color: #1d6f8a;
`;

const RoutingBottom = styled.div`
  flex: 1;
  color: #999;
  text-align: center;
  font: 7.5px/17px 'Liberation Sans', sans-serif;
  letter-spacing: -0.1px;
`;

const MonoBox = styled.div`
  width: 37px;
  height: 31px;
  background: #2c2c2c;
  color: #999;
  text-align: center;
  font: 7.5px/10px 'Liberation Sans', sans-serif;
`;

const MonoTop = styled.div`
  height: 14px;
  margin: 3px 2px 2px;
  background: #aebaba;
  display: flex;
  align-items: center;
  justify-content: center;
`;

const StripName = styled.div`
  height: 23px;
  color: #aaa;
  border-right: 1px solid #555;
  text-align: center;
  font: 11.5px/22px 'Liberation Sans', sans-serif;
`;

const FaderPanel = styled.div`
  height: 220px;
  background: #9ba6a6;
  border-right: 1px solid #333;
  display: flex;
  flex-direction: column;
`;

const KnobRow = styled.div`
  height: 36px;
  display: flex;
  align-items: center;
  justify-content: center;
`;

const FaderBody = styled.div`
  position: relative;
  display: flex;
`;

const MeterBlock = styled.div`
  position: relative;
  width: ${(p) => p.$w}px;
  height: 176px;
  margin-left: ${(p) => (p.$flush ? 0 : 6)}px;
  background: #272727;
  border-radius: 0 0 8px 0;
  color: #666;
  font: 10px 'Liberation Sans', sans-serif;
`;

const PeakText = styled.div`
  text-align: center;
  width: 80px;
  margin-left: ${(p) => (p.$center ? -13 : 4)}px;
  padding-top: 4px;
  font-size: 11px;
  line-height: 13px;
`;

const RmsRow = styled.div`
  display: flex;
  gap: 12px;
  padding: 1px 0 0 9px;
  line-height: 11px;
  font-size: 10px;
`;

const ScaleList = styled.div`
  margin-top: -1px;
  width: 59px;
  margin-left: 4px;
  display: flex;
  flex-direction: column;
`;

const ScaleRow = styled.div`
  height: 12.44px;
  display: flex;
  align-items: center;
  justify-content: center;
`;

const ScaleText = styled.span`
  width: 13px;
  flex-shrink: 0;
  display: flex;
  justify-content: center;
  font-size: 10px;
  white-space: nowrap;
`;

const GreenBar = styled.div`
  width: 23px;
  height: 10px;
  flex-shrink: 0;
  background: #0e8a55;
`;

const PeakFoot = styled.div`
  position: absolute;
  left: 4px;
  bottom: 3px;
  width: 59px;
  height: 12px;
  background: #2f2f2f;
  display: flex;
  justify-content: space-around;
  line-height: 12px;
`;

const FaderLine = styled.div`
  position: absolute;
  left: ${(p) => p.$left}px;
  top: 25px;
  width: 1px;
  height: 141px;
  background: #0a0a0a;
`;

const FaderCap = styled.div`
  position: absolute;
  left: ${(p) => p.$left}px;
  top: 50px;
  width: 19px;
  display: flex;
  flex-direction: column;
  gap: 1px;
  box-shadow: 0 0 0 1px #111;
  background: #111;
`;

const CapHalf = styled.div`
  height: 20px;
  border-radius: 1px;
  background: ${(p) => (p.$lower
    ? 'linear-gradient(#666, #ddd 35%, #eee 55%, #444)'
    : 'linear-gradient(#444, #888 40%, #ccc 70%, #555)')};
`;

const SideButtons = styled.div`
  width: 20px;
  margin-left: 4px;
  display: flex;
  flex-direction: column;
  align-items: center;
`;

const SquareButton = styled.div`
  width: 20px;
  height: 20px;
  margin-bottom: 6px;
  flex-shrink: 0;
  background: linear-gradient(#f3f0ea, #d8d5d0);
  border: 1px solid #666;
  color: #333;
  font: bold 11px 'Liberation Sans', sans-serif;
  display: flex;
  align-items: center;
  justify-content: center;
`;

const TrimButton = styled.div`
  width: 20px;
  height: 16px;
  border: 1px solid #6d7979;
  background: #a8b3b3;
  color: #555;
  display: flex;
  align-items: center;
  justify-content: center;
`;

const TrimText = styled.div`
  color: #6a7575;
  font: 10px/14px 'Liberation Sans', sans-serif;
`;

const SendTab = styled.div`
  width: 17px;
  height: 16px;
  margin-top: 8px;
  background: #8a9696;
  color: #c4cccc;
  display: flex;
  align-items: center;
  justify-content: center;
`;

const InTab = styled.div`
  width: 17px;
  margin-top: 6px;
  padding-top: 1px;
  background: #8a9696;
  border-radius: 0 0 8px 8px;
  color: #c4cccc;
  text-align: center;
  font: bold 9px/10px 'Liberation Sans', sans-serif;
`;

const CornerButton = styled.div`
  position: absolute;
  left: ${(p) => p.$left}px;
  bottom: 0;
  width: 22px;
  height: 22px;
  border-radius: 50%;
  border: 2px solid #232323;
  background: ${(p) => p.$color};
  display: flex;
  align-items: center;
  justify-content: center;
`;

const RecDot = styled.div`
  width: 10px;
  height: 10px;
  border-radius: 50%;
  border: 2px solid #d8b2a2;
`;

const TrackScale = styled.div`
  padding: 0 0 0 6px;
`;

const InfText = styled.div`
  height: 12px;
  line-height: 12px;
  margin-bottom: 9px;
`;

const TrackScaleText = styled.div`
  height: 12px;
  line-height: 12px;
  margin-bottom: 15px;
`;

const TrackFoot = styled.div`
  height: 18px;
  margin-top: 1px;
  background: #7f8b8b;
  border-right: 1px solid #333;
  color: #ccd4d4;
  text-align: center;
  font: 11px/18px 'Liberation Sans', sans-serif;
`;

const DockBar = styled.div`
  height: 15px;
  background: #4a4a4a;
  display: flex;
`;

const DockBang = styled.span`
  width: 9px;
  color: #ddd;
  font: 10px/15px 'Liberation Sans', sans-serif;
  padding-left: 2px;
`;

const DockTab = styled.div`
  width: 57px;
  background: #dcdcdc;
  display: flex;
  align-items: center;
  gap: 5px;
  padding-left: 6px;
  color: #222;
  font: bold 10.5px 'Liberation Sans', sans-serif;
`;

const Taskbar = styled.div`
  height: 40px;
  background: #16233f;
  display: flex;
  justify-content: space-between;
  color: #fff;
`;

const TaskIconRow = styled.div`
  display: flex;
`;

const TaskCell = styled.div`
  width: 49px;
  height: 40px;
  display: flex;
  align-items: center;
  justify-content: center;
  background: ${(p) => (p.$active ? '#3e4a66' : 'transparent')};
  border-bottom: ${(p) => (p.$active ? '2px solid #a9c4ee' : '0')};
`;

const ChromeDisc = styled.div`
  width: 24px;
  height: 24px;
  border-radius: 50%;
  background: conic-gradient(#e2483c 0 120deg, #f8c630 120deg 200deg, #2f9d4f 200deg 300deg, #e2483c 300deg);
  display: flex;
  align-items: center;
  justify-content: center;
`;

const ChromeDot = styled.div`
  width: 12px;
  height: 12px;
  border-radius: 50%;
  background: #4a8be8;
  border: 2px solid #fff;
`;

const Tray = styled.div`
  display: flex;
  align-items: center;
  font-size: 13.5px;
`;

const TrayTemp = styled.span`
  margin-left: 10px;
`;

const TrayWeather = styled.span`
  margin-left: 8px;
  letter-spacing: -0.1px;
`;

const TrayIcons = styled.div`
  display: flex;
  align-items: center;
  gap: 8px;
  margin-left: 17px;
`;

const Clock = styled.div`
  width: 76px;
  margin-left: -3px;
  display: flex;
  flex-direction: column;
  align-items: center;
  font-size: 12px;
  line-height: 18px;
`;

const NotifyIcon = styled.div`
  width: 17px;
  display: flex;
  margin-left: 6px;
`;

const ShowDesktop = styled.div`
  width: 1px;
  height: 40px;
  margin: 0 3px 0 20px;
  background: #3a4660;
`;

const MenuBox = styled.div`
  position: absolute;
  padding: 2px 2px;
  background: #f2f2f2;
  border: 1px solid #d0d0d0;
  box-shadow: 3px 3px 4px rgba(0, 0, 0, 0.45);
`;

const Row = styled.div`
  position: relative;
  height: 22px;
  display: flex;
  align-items: center;
  background: ${(p) => (p.$active ? '#91c9f7' : 'transparent')};
  font-size: 12px;
  letter-spacing: -0.25px;
  color: #111;
`;

const Check = styled.div`
  width: 22px;
  height: 22px;
  background: ${(p) => (p.$active ? '#62b1f6' : 'transparent')};
  display: flex;
  align-items: center;
  justify-content: center;
  flex-shrink: 0;
`;

const RowLabel = styled.span`
  margin-left: 10px;
  padding-bottom: 3px;
  white-space: nowrap;
`;

const BoldLabel = styled.b`
  margin-left: 5px;
  letter-spacing: 0;
  font: bold 12.5px 'DejaVu Sans', sans-serif;
`;

const Chevron = styled.svg`
  position: absolute;
  left: ${(p) => p.$at}px;
  top: 6px;
`;

const MenuSeparator = styled.div`
  height: 1px;
  margin: 3px 0 3px 30px;
  background: #ccc;
`;

const RedArrow = styled.svg`
  position: absolute;
  left: 97px;
  top: 166px;
  z-index: 2;
`;
